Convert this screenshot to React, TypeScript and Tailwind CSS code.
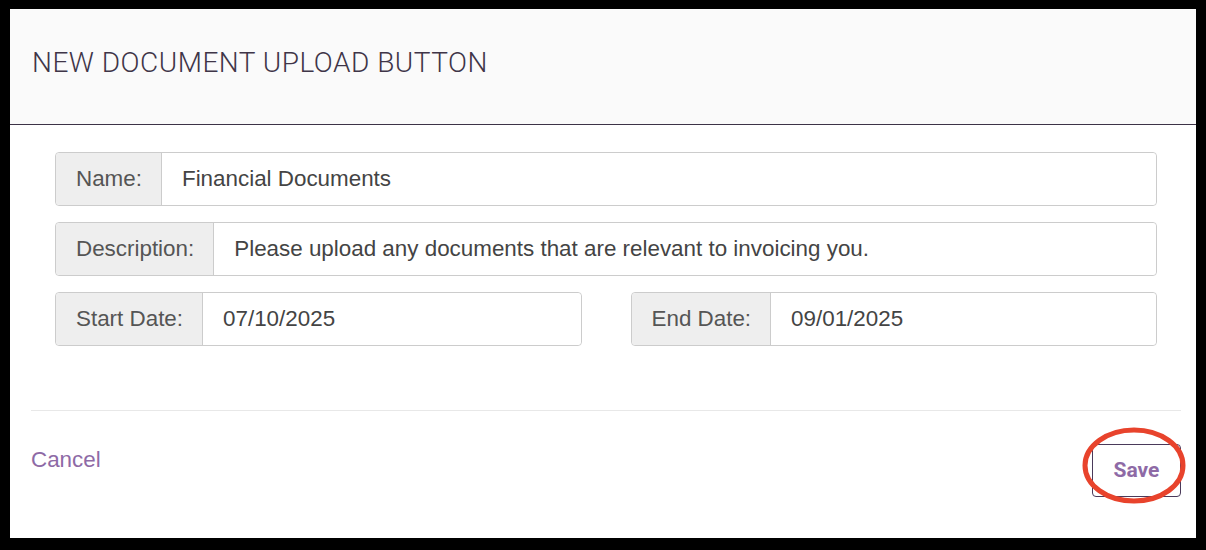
export default function App() {
  const sans = { fontFamily: '"Liberation Sans", Arial, sans-serif' };

  const Field = ({ label, value }: { label: string; value: string }) => (
    <div className="flex h-[54px] rounded-[4px] border border-[#cccccc] text-[22.4px]" style={sans}>
      <div className="flex items-center rounded-l-[4px] border-r border-[#cccccc] bg-[#eeeeee] pr-[19px] pl-5 text-[#555555]">
        {label}
      </div>
      <div className="flex flex-1 items-center rounded-r-[4px] bg-white px-5 text-[#444444]">{value}</div>
    </div>
  );

  return (
    <div className="h-[550px] w-[1206px] bg-black pt-[9px] pr-[10px] pb-[12px] pl-[10px]">
      <div className="flex h-full flex-col bg-white">
        {/* header */}
        <div className="h-[116px] border-b border-[#3d3347] bg-[#fafafa] pt-[33px] pl-[22px]">
          <h1
            className="text-[28px] leading-normal font-light tracking-[0.5px] text-[#3f3548]"
            style={{ fontFamily: 'Roboto, "Liberation Sans", sans-serif' }}
          >
            NEW DOCUMENT UPLOAD BUTTON
          </h1>
        </div>

        {/* form */}
        <div className="flex flex-col gap-4 pt-[27px] pr-[39px] pl-[45px]">
          <Field label="Name:" value="Financial Documents" />
          <Field label="Description:" value="Please upload any documents that are relevant to invoicing you." />
          <div className="grid grid-cols-2 gap-[49px]">
            <Field label="Start Date:" value="07/10/2025" />
            <Field label="End Date:" value="09/01/2025" />
          </div>
        </div>

        {/* footer */}
        <div className="mt-[64px] mr-[15px] ml-[21px] flex items-start justify-between border-t border-[#e8e8e8] pt-[33px]">
          <a className="-mt-[1px] text-[22.4px] text-[#8e6aa6]" style={sans} href="#">
            Cancel
          </a>
          <div className="relative">
            <button
              className="h-[53px] w-[89px] rounded-[4px] border border-[#4a3a5a] bg-white text-[21px] font-bold text-[#8e6aa6]"
              style={{ fontFamily: 'Roboto, "Liberation Sans", sans-serif' }}
            >
              Save
            </button>
            {/* annotation circle */}
            <svg className="pointer-events-none absolute top-[-17px] left-[-10px]" width="104" height="77" viewBox="0 0 104 77">
              <ellipse cx="52" cy="38.5" rx="49" ry="35.5" fill="none" stroke="#e8432c" strokeWidth="5" />
            </svg>
          </div>
        </div>
      </div>
    </div>
  );
}
